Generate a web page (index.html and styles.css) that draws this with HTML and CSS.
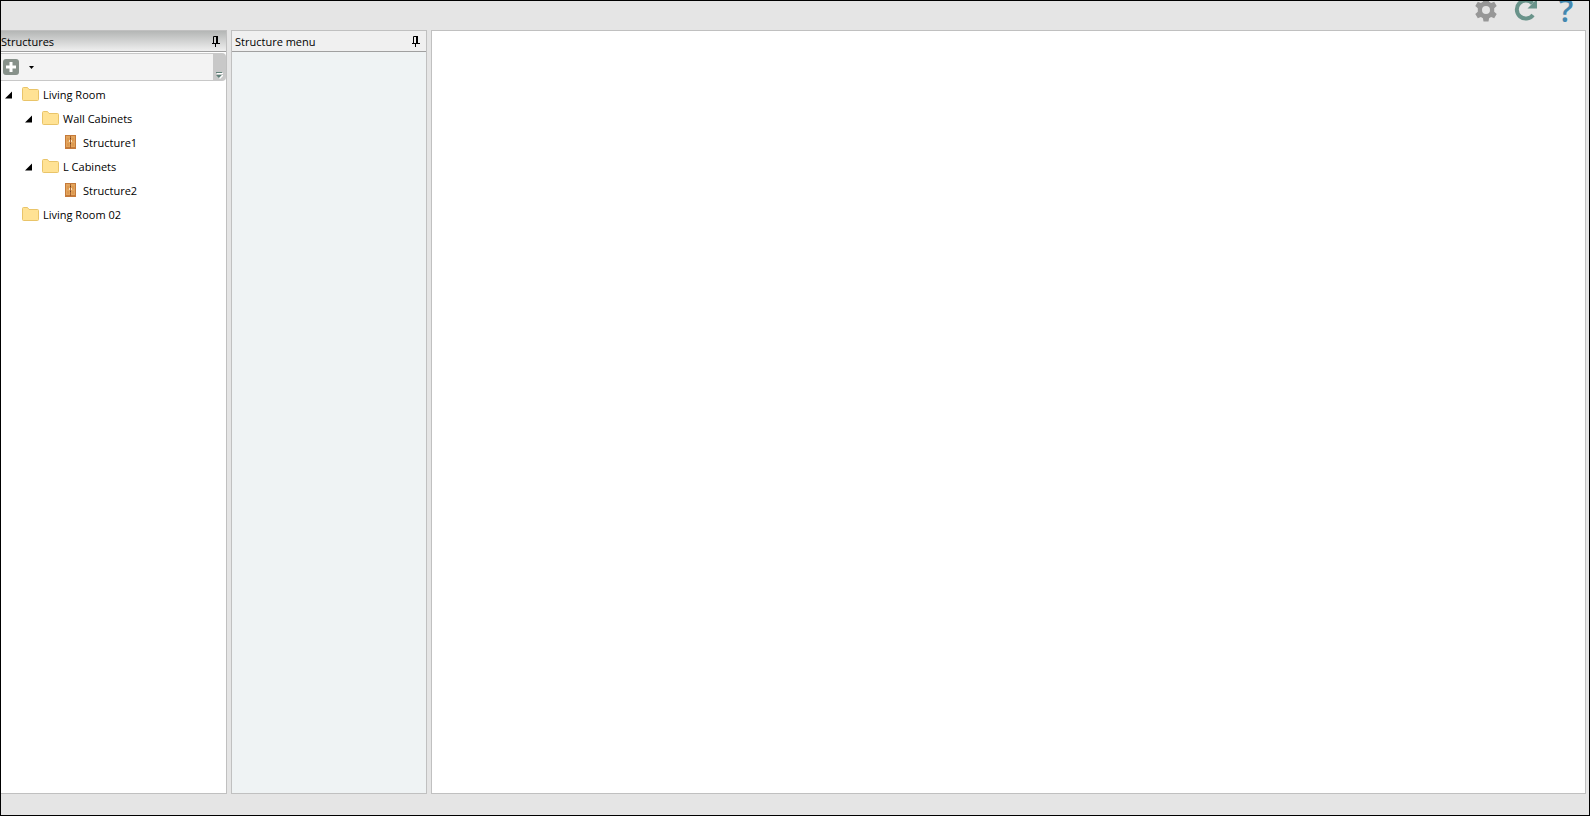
FILE: index.html
```html
<!DOCTYPE html>
<html lang="en">
<head>
    <meta charset="UTF-8">
    <meta name="viewport" content="width=device-width, initial-scale=1.0">
    <title>Structures</title>
    <link rel="stylesheet" href="styles.css">
</head>
<body>
    <!-- shared icons -->
    <svg class="icon-defs" aria-hidden="true">
        <symbol id="icon-pin" viewBox="0 0 8 11">
            <path d="M1.5 7V.5h4V7" fill="none" stroke="#000"/>
            <path d="M4 0h2v7H4zM0 7h8v1H0zM3 8h1v3H3z"/>
        </symbol>
        <symbol id="icon-folder" viewBox="0 0 17 14">
            <path d="M.5 12.500V1.500q0-1 1-1h4l1.500 2h8.500q1 0 1 1v9q0 1-1 1h-14q-1 0-1-1z" fill="#ffe294" stroke="#e9c469"/>
        </symbol>
        <symbol id="icon-cabinet" viewBox="0 0 11 14">
            <path d="M0 0h11v14H0z" fill="#c47a3a"/>
            <path d="M1 1h4v11H1zM6 1h4v11H6z" fill="#e2a45d"/>
            <path d="M2 3h2v3H2zM7 3h2v3H7zM2 8h2v3H2zM7 8h2v3H7z" fill="#dc984e"/>
            <path d="M5 1h1v12H5z" fill="#a9622b"/>
            <path d="M4 5h1v2H4zM6 5h1v2H6z" fill="#f7e3c4"/>
            <path d="M5 3h1v1H5zM5 8h1v1H5z" fill="#6c4425"/>
        </symbol>
        <symbol id="icon-expanded" viewBox="0 0 8 8">
            <path d="M7 .5v7H0z"/>
        </symbol>
    </svg>

    <div class="window">
        <header class="topbar">
            <button type="button" class="icon-btn" aria-label="Settings">
                <svg width="24" height="24" viewBox="0 0 24 24">
                    <path fill="#979797" fill-rule="evenodd" d="M9.500.5h5l.6 3.300 2 1.100 3.100-1.200 2.500 4.300-2.500 2.200v3.600l2.500 2.200-2.500 4.300-3.100-1.200-2 1.100-.6 3.300h-5l-.6-3.300-2-1.100-3.100 1.200L1.300 16l2.500-2.200v-3.600L1.300 8l2.500-4.300 3.100 1.200 2-1.100zM12 8a4 4 0 1 0 0 8 4 4 0 0 0 0-8z"/>
                </svg>
            </button>
            <button type="button" class="icon-btn" aria-label="Refresh">
                <svg width="24" height="24" viewBox="0 0 24 24">
                    <path fill="none" stroke="#69938a" stroke-width="4" d="M18.500 5.500A9 9 0 1 0 19 17"/>
                    <path fill="#69938a" d="M23 1v9.500H13.500z"/>
                </svg>
            </button>
            <button type="button" class="icon-btn help-btn" aria-label="Help">?</button>
        </header>

        <main class="workspace">
            <section class="panel structures">
                <div class="panel-header active">
                    <span class="panel-title">Structures</span>
                    <button type="button" class="pin-btn" aria-label="Pin Structures">
                        <svg width="8" height="11"><use href="#icon-pin"/></svg>
                    </button>
                </div>
                <div class="toolbar">
                    <button type="button" class="add-btn" aria-label="Add">
                        <svg width="16" height="16" viewBox="0 0 16 16">
                            <rect width="16" height="16" rx="3" fill="#87918a"/>
                            <path d="M8 3v10M3 8h10" stroke="#fff" stroke-width="3"/>
                        </svg>
                    </button>
                    <button type="button" class="add-menu-btn" aria-label="Add options">
                        <svg width="5" height="3" viewBox="0 0 5 3"><path d="M0 0h5L2.500 3z"/></svg>
                    </button>
                    <button type="button" class="overflow-btn" aria-label="Toolbar options">
                        <svg width="7" height="7" viewBox="0 0 7 7">
                            <path d="M0 0h6v1H0zM0 3h6L3 6z" fill="#5f8078"/>
                            <path d="M1 1h6v1H1zM6 3h1v1L4 7l-1-1z" fill="#fff"/>
                        </svg>
                    </button>
                </div>
                <ul class="tree">
                    <li>
                        <div class="node">
                            <button type="button" class="toggle" aria-label="Collapse Living Room"><svg width="8" height="8"><use href="#icon-expanded"/></svg></button>
                            <svg class="node-icon" width="17" height="14"><use href="#icon-folder"/></svg>
                            <span>Living Room</span>
                        </div>
                        <ul>
                            <li>
                                <div class="node">
                                    <button type="button" class="toggle" aria-label="Collapse Wall Cabinets"><svg width="8" height="8"><use href="#icon-expanded"/></svg></button>
                                    <svg class="node-icon" width="17" height="14"><use href="#icon-folder"/></svg>
                                    <span>Wall Cabinets</span>
                                </div>
                                <ul>
                                    <li>
                                        <div class="node leaf">
                                            <svg class="node-icon" width="17" height="14"><use href="#icon-cabinet"/></svg>
                                            <span>Structure1</span>
                                        </div>
                                    </li>
                                </ul>
                            </li>
                            <li>
                                <div class="node">
                                    <button type="button" class="toggle" aria-label="Collapse L Cabinets"><svg width="8" height="8"><use href="#icon-expanded"/></svg></button>
                                    <svg class="node-icon" width="17" height="14"><use href="#icon-folder"/></svg>
                                    <span>L Cabinets</span>
                                </div>
                                <ul>
                                    <li>
                                        <div class="node leaf">
                                            <svg class="node-icon" width="17" height="14"><use href="#icon-cabinet"/></svg>
                                            <span>Structure2</span>
                                        </div>
                                    </li>
                                </ul>
                            </li>
                        </ul>
                    </li>
                    <li>
                        <div class="node leaf">
                            <svg class="node-icon" width="17" height="14"><use href="#icon-folder"/></svg>
                            <span>Living Room 02</span>
                        </div>
                    </li>
                </ul>
            </section>

            <section class="panel structure-menu">
                <div class="panel-header">
                    <span class="panel-title">Structure menu</span>
                    <button type="button" class="pin-btn" aria-label="Pin Structure menu">
                        <svg width="8" height="11"><use href="#icon-pin"/></svg>
                    </button>
                </div>
            </section>

            <section class="panel canvas"></section>
        </main>
    </div>
</body>
</html>
```

FILE: styles.css
```css
* {
    box-sizing: border-box;
}
body {
    margin: 0;
    font-family: "Open Sans", "Noto Sans", sans-serif;
    font-size: 11px;
    line-height: 16px;
    color: #000;
}
button {
    display: flex;
    padding: 0;
    border: none;
    background: none;
    cursor: pointer;
}
svg {
    display: block;
}
.icon-defs {
    display: none;
}
.window {
    display: flex;
    flex-direction: column;
    height: 100vh;
    border: 1px solid #000;
    background-color: #e5e5e5;
}

/* Top bar */
.topbar {
    display: flex;
    justify-content: flex-end;
    gap: 16px;
    height: 29px;
    padding-right: 11px;
    overflow: hidden;
}
.icon-btn {
    width: 24px;
    height: 24px;
    margin-top: -3px;
    justify-content: center;
    align-items: center;
}
.help-btn {
    font-family: "Open Sans", sans-serif;
    font-size: 32px;
    font-weight: 600;
    line-height: 24px;
    color: #4488b0;
}

/* Panels */
.workspace {
    display: flex;
    flex: 1;
    gap: 4px;
    padding: 0 3px 21px 0;
}
.panel {
    border: 1px solid #c0c0c0;
    background-color: #fff;
}
.structures {
    width: 226px;
    border-left: none;
}
.structure-menu {
    width: 196px;
    background-color: #eff3f4;
}
.canvas {
    flex: 1;
}
.panel-header {
    display: flex;
    justify-content: space-between;
    align-items: center;
    height: 21px;
    padding: 0 6px 0 3px;
    border-bottom: 1px solid #a0a0a0;
    background-color: #f0f0f0;
}
.panel-header.active {
    padding-left: 0;
    background: linear-gradient(#b4b6b5, #efefef);
}
.panel-title {
    padding-top: 2px;
}

/* Toolbar */
.toolbar {
    display: flex;
    align-items: center;
    height: 28px;
    margin-top: 1px;
    padding-left: 2px;
    border: 1px solid #c8c8c8;
    border-left: none;
    border-radius: 0 4px 4px 0;
    background-color: #f3f3f3;
}
.add-menu-btn {
    padding: 8px 10px;
}
.overflow-btn {
    align-self: stretch;
    align-items: flex-end;
    justify-content: center;
    width: 12px;
    margin-left: auto;
    padding-bottom: 1px;
    background-color: #c8c8c8;
}

/* Tree */
.tree,
.tree ul {
    margin: 0;
    padding: 0;
    list-style: none;
}
.tree {
    padding: 2px 0 0 4px;
}
.tree ul {
    padding-left: 20px;
}
.node {
    display: flex;
    align-items: center;
    height: 24px;
}
.toggle {
    width: 17px;
}
.leaf {
    padding-left: 17px;
}
.node-icon {
    margin: 0 4px 2px 0;
}
```
